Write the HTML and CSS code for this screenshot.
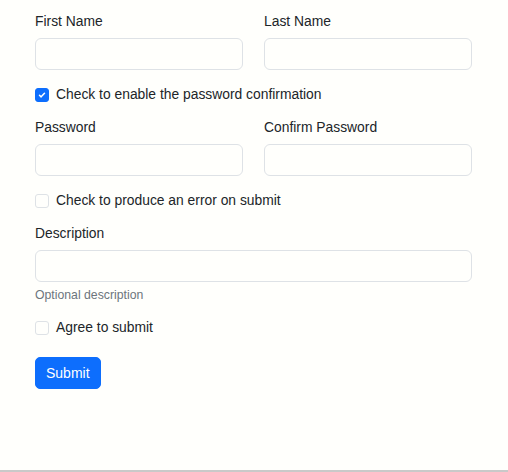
FILE: index.html
```html
<!DOCTYPE html>
<html lang="en">
<head>
<meta charset="utf-8">
<title>Form</title>
<link rel="stylesheet" href="styles.css">
</head>
<body>
<div class="page">
  <form class="form">
    <div class="row">
      <div class="field">
        <label class="label">First Name</label>
        <input class="input" type="text">
      </div>
      <div class="field">
        <label class="label">Last Name</label>
        <input class="input" type="text">
      </div>
    </div>
    <label class="check check-first">
      <span class="box box-checked">
        <svg width="10" height="10" viewBox="0 0 20 20"><path d="M5 10.5l3.2 3.2L15 6.5" fill="none" stroke="#fff" stroke-width="3" stroke-linecap="round" stroke-linejoin="round"/></svg>
      </span>
      <span class="check-text">Check to enable the password confirmation</span>
    </label>
    <div class="row row-gap">
      <div class="field">
        <label class="label">Password</label>
        <input class="input" type="password">
      </div>
      <div class="field">
        <label class="label">Confirm Password</label>
        <input class="input" type="password">
      </div>
    </div>
    <label class="check">
      <span class="box"></span>
      <span class="check-text">Check to produce an error on submit</span>
    </label>
    <div class="field field-full">
      <label class="label">Description</label>
      <input class="input" type="text">
      <div class="help">Optional description</div>
    </div>
    <label class="check check-agree">
      <span class="box"></span>
      <span class="check-text">Agree to submit</span>
    </label>
    <div class="actions">
      <button class="btn" type="button">Submit</button>
    </div>
  </form>
</div>
</body>
</html>
```
FILE: styles.css
```css
html, body {
  margin: 0;
  padding: 0;
  background: #fffffc;
}
body {
  font-family: "Liberation Sans", Arial, sans-serif;
  font-size: 13.85px;
  color: #212529;
}
.page {
  height: 472px;
  box-sizing: border-box;
  border-bottom: 2px solid #c9c9c9;
  padding: 11px 36px 0 35px;
}
.form {
  display: flex;
  flex-direction: column;
}
.row {
  display: grid;
  grid-template-columns: 1fr 1fr;
  column-gap: 21px;
}
.row-gap {
  margin-top: 12px;
}
.field {
  display: flex;
  flex-direction: column;
}
.field-full {
  margin-top: 12px;
}
.label {
  line-height: 21px;
  height: 21px;
  margin-bottom: 6px;
}
.input {
  box-sizing: border-box;
  height: 32px;
  width: 100%;
  margin: 0;
  border: 1px solid #dee2e6;
  border-radius: 6px;
  background: transparent;
  font: inherit;
  padding: 0 12px;
  outline: none;
}
.check {
  display: flex;
  align-items: center;
  height: 21px;
  margin-top: 14px;
  gap: 7px;
  line-height: 21px;
}
.check-agree {
  margin-top: 13px;
}
.box {
  box-sizing: border-box;
  width: 14px;
  height: 14px;
  border: 1px solid #dee2e6;
  border-radius: 3px;
  display: flex;
  align-items: center;
  justify-content: center;
  flex: none;
}
.box-checked {
  background: #0d6efd;
  border-color: #0d6efd;
}
.help {
  margin-top: 4px;
  font-size: 12.25px;
  line-height: 18px;
  color: #6c757d;
}
.actions {
  margin-top: 19px;
}
.btn {
  height: 32px;
  padding: 0 10px;
  border: 1px solid #0d6efd;
  border-radius: 5px;
  background: #0d6efd;
  color: #fff;
  font: inherit;
  font-size: 14px;
  cursor: pointer;
}
```
